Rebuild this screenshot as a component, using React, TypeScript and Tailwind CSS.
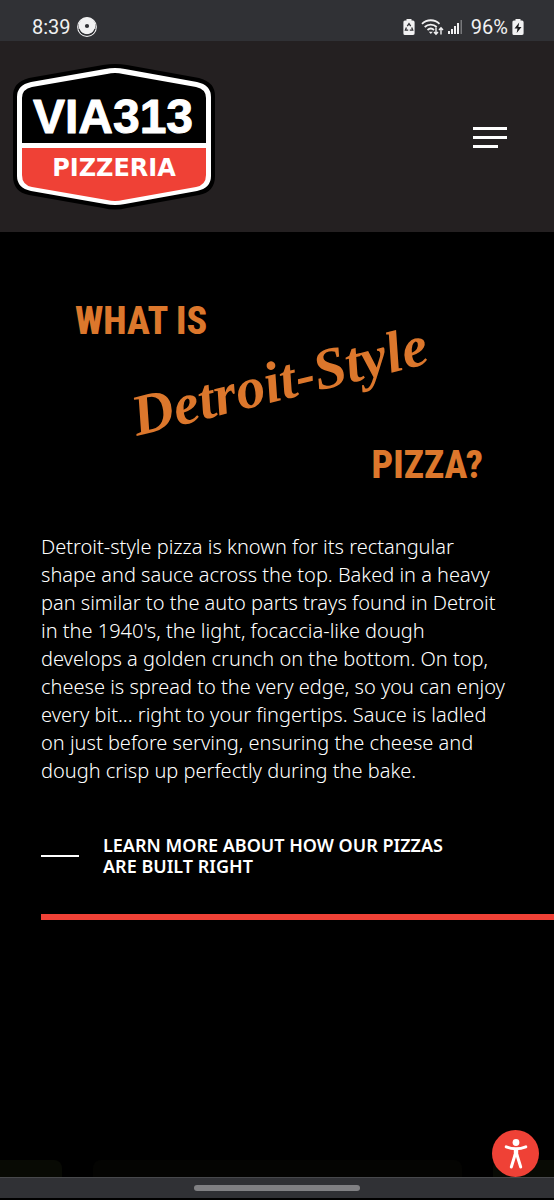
import React from "react";

function StatusBar() {
  return (
    <div className="flex h-[41px] items-end justify-between bg-[#303135] pr-[30px] pl-8 font-['Roboto',sans-serif] text-xl text-[#f1f1f2]">
      <div className="flex items-center gap-1.5 leading-7">
        <span>8:39</span>
        <svg className="size-5" viewBox="0 0 20 20" aria-hidden="true">
          <circle cx="10" cy="10" r="9.3" fill="none" stroke="#f1f1f2" strokeWidth="1.2" />
          <circle cx="10" cy="9" r="8.4" fill="#f1f1f2" />
          <path d="M2 12a8.4 8.4 0 0 0 16 0" fill="none" stroke="#303135" strokeWidth="1.1" />
          <circle cx="10" cy="9" r="2.1" fill="#303135" />
        </svg>
      </div>
      <div className="flex items-center leading-7">
        <svg className="mr-1.5 h-[18px] w-3" viewBox="0 0 12 18" aria-hidden="true">
          <path d="M3.5 1h5v1.6H10a1.6 1.6 0 0 1 1.6 1.6v11A1.6 1.6 0 0 1 10 17H2a1.6 1.6 0 0 1-1.6-1.6v-11A1.6 1.6 0 0 1 2 2.6h1.5z" fill="#f1f1f2" />
          <path d="M4.3 8.2 6 5.6l1.7 2.6M8.7 9.6l1 2.6H6.8M5.2 12.2H2.4l1-2.6" fill="none" stroke="#303135" strokeWidth="1.3" />
        </svg>
        <svg className="mr-1 h-[18px] w-[23px]" viewBox="0 0 23 18" fill="none" stroke="#f1f1f2" aria-hidden="true">
          <path d="M1 5.8a12.5 12.5 0 0 1 17.5 0" strokeWidth="1.8" />
          <path d="M3.7 9a8.8 8.8 0 0 1 12 0" strokeWidth="1.8" />
          <path d="M6.5 12a4.9 4.9 0 0 1 6.5 0" strokeWidth="1.8" />
          <path d="m7.8 13.8 2 2.3 2-2.3z" fill="#f1f1f2" stroke="none" />
          <path d="M15 9.5v6.5m-2-2 2 2.2 2-2.2M20 16.5V10m-2 2 2-2.2 2 2.2" strokeWidth="1.4" />
        </svg>
        <svg className="mr-2 h-[18px] w-[15px]" viewBox="0 0 15 18" fill="#f1f1f2" aria-hidden="true">
          <path d="M0 13h2v3H0zM3 11h2v5H3zM6 8h2v8H6zM9 5h2v11H9z" />
          <path d="M12.5 2h1.5v14h-1.5z" fill="#77787b" />
        </svg>
        <span>96%</span>
        <svg className="ml-1 h-[18px] w-3" viewBox="0 0 12 18" aria-hidden="true">
          <path d="M3.5 1h5v1.6H10a1.6 1.6 0 0 1 1.6 1.6v11A1.6 1.6 0 0 1 10 17H2a1.6 1.6 0 0 1-1.6-1.6v-11A1.6 1.6 0 0 1 2 2.6h1.5z" fill="#f1f1f2" />
          <path d="M7.2 4.5 2.5 10.5h3L4.7 15l4.8-6H6.4z" fill="#18181a" />
        </svg>
      </div>
    </div>
  );
}

function Logo() {
  return (
    <svg className="block h-[146px] w-[203px]" viewBox="0 0 203 146" role="img" aria-label="Via 313 Pizzeria">
      <path d="M102 0Q108 0 114 1L186 14Q202 18 202 32V112Q202 128 186 131L114 144Q102 147 90 144L16 131Q0 128 0 112V32Q0 18 16 14L90 1Q96 0 102 0Z" fill="#000" />
      <path d="M102 4Q107 4 112 5L184 18Q198 21 198 33V112Q198 124 184 127L112 140Q102 142 92 140L18 127Q4 124 4 112V33Q4 21 18 18L92 5Q97 4 102 4Z" fill="#fff" />
      <path d="M102 9Q106 9 110 10L183 23Q193 25 193 34V79H9V34Q9 25 19 23L94 10Q98 9 102 9Z" fill="#000" />
      <path d="M9 84H193V111Q193 121 183 123L110 136Q102 138 94 136L19 123Q9 121 9 111Z" fill="#ef4136" />
      <text x="100" y="69" textAnchor="middle" fill="#fff" stroke="#fff" strokeWidth="1" strokeLinejoin="round" className="font-['Liberation_Sans',sans-serif] text-[48px] font-bold">VIA313</text>
      <text x="101" y="112" textAnchor="middle" fill="#fff" className="font-['DejaVu_Sans',sans-serif] text-2xl font-bold">PIZZERIA</text>
    </svg>
  );
}

function Header() {
  return (
    <header className="flex items-center justify-between bg-[#242021] pt-[23px] pr-[47px] pb-[22px] pl-[13px]">
      <a href="#home">
        <Logo />
      </a>
      <button type="button" aria-label="Open menu" className="flex w-[34px] flex-col gap-1.5">
        <span className="h-[3px] w-full bg-white" />
        <span className="h-[3px] w-full bg-white" />
        <span className="h-[3px] w-[25px] bg-white" />
      </button>
    </header>
  );
}

function Intro() {
  return (
    <section className="pt-[65px] pl-[41px]">
      <h1 className="flex flex-col pr-[71px] pl-[34px] font-['Roboto_Condensed','Roboto',sans-serif] text-[38px] leading-[48px] font-extrabold text-[#dc772c]">
        <span>WHAT IS</span>
        <span className="mt-1 mb-7 origin-center -rotate-14 self-center font-['Liberation_Serif',serif] text-[58px] leading-[64px] font-bold whitespace-nowrap italic">
          Detroit-Style
        </span>
        <span className="self-end">PIZZA?</span>
      </h1>
      <p className="mt-11 pr-12 font-['Noto_Sans',sans-serif] text-xl leading-7 font-[350] text-white">
        Detroit-style pizza is known for its rectangular shape and sauce across the top. Baked in a heavy pan similar to
        the auto parts trays found in Detroit in the 1940's, the light, focaccia-like dough develops a golden crunch on
        the bottom. On top, cheese is spread to the very edge, so you can enjoy every bit... right to your fingertips.
        Sauce is ladled on just before serving, ensuring the cheese and dough crisp up perfectly during the bake.
      </p>
      <a
        href="#built-right"
        className="mt-[50px] mr-20 flex items-center gap-6 font-['Noto_Sans',sans-serif] text-lg leading-[21px] font-semibold text-white"
      >
        <span className="h-0.5 w-[38px] shrink-0 bg-white" />
        <span>LEARN MORE ABOUT HOW OUR PIZZAS ARE BUILT RIGHT</span>
      </a>
      <div className="mt-[37px] h-1.5 bg-[#ef4136]" />
    </section>
  );
}

export default function App() {
  return (
    <div className="flex min-h-screen flex-col bg-black">
      <StatusBar />
      <Header />
      <main className="flex grow flex-col justify-between">
        <Intro />
        <div className="flex h-[17px] gap-[31px]">
          <div className="w-[62px] rounded-tr-lg bg-[#080a04]" />
          <div className="grow rounded-t-lg bg-[#040402]" />
          <div className="w-[61px] rounded-tl-lg bg-[#080a04]" />
        </div>
      </main>
      <div className="flex h-[23px] items-center justify-center border-t border-b-2 border-t-[#48494c] border-b-black bg-[#303135]">
        <div className="h-1.5 w-[30%] rounded-full bg-[#808083]" />
      </div>
      <button
        type="button"
        aria-label="Accessibility options"
        className="fixed right-[15px] bottom-[23px] flex size-[47px] items-center justify-center rounded-full bg-[#ef4136]"
      >
        <svg className="h-8 w-6" viewBox="0 0 24 32" fill="none" stroke="#fff" strokeLinecap="round" strokeLinejoin="round" aria-hidden="true">
          <circle cx="12" cy="4.5" r="3.4" fill="#fff" stroke="none" />
          <path d="M2.2 8.8Q12 12.8 21.8 8.8" strokeWidth="3" />
          <path d="M9.8 11h4.4v8H9.8z" fill="#fff" stroke="none" />
          <path d="M11 17 7.3 29M13 17l3.7 12" strokeWidth="3" />
        </svg>
      </button>
    </div>
  );
}
